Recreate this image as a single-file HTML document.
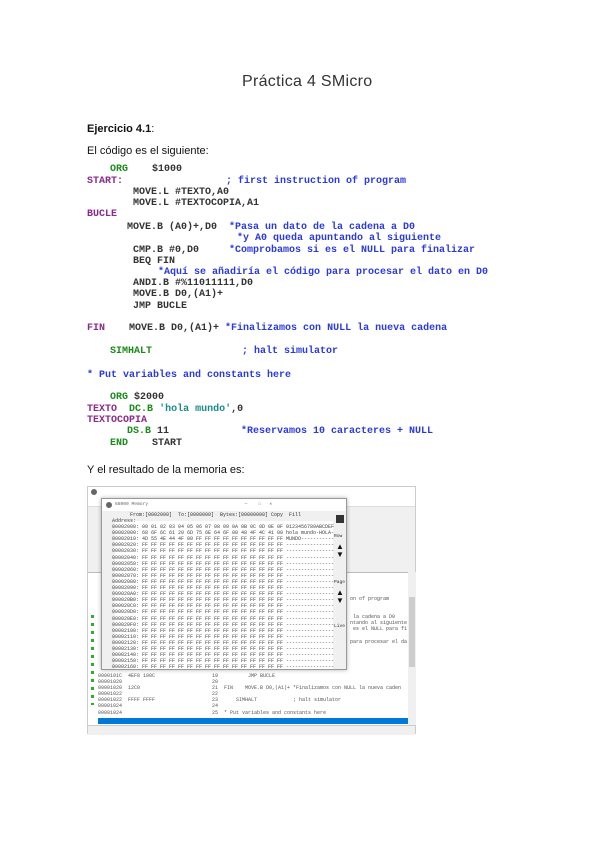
<!DOCTYPE html>
<html><head><meta charset="utf-8"><style>
body{margin:0;width:600px;height:848px;background:#fff;position:relative;overflow:hidden;font-family:"Liberation Sans",sans-serif}
.t{position:absolute;white-space:pre;font-size:11px;color:#111}
.c{position:absolute;white-space:pre;font-family:"Liberation Mono",monospace;font-size:10px;font-weight:bold;color:#333;line-height:11px}
.g{color:#1a8a1a}.p{color:#8a2a8a}.b{color:#2a3ae0}.tl{color:#1a8a8a}
.m{position:absolute;white-space:pre;font-family:"Liberation Mono",monospace;font-size:4.6px;color:#555;line-height:6.1px}
.mm{font-size:5px}
</style></head><body>
<div class="t" style="left:242px;top:73px;font-size:16px;color:#333;letter-spacing:0.3px">Práctica 4 SMicro</div>
<div class="t" style="left:87px;top:123px;font-weight:bold">Ejercicio 4.1<span style="font-weight:normal">:</span></div>
<div class="t" style="left:87px;top:145px">El código es el siguiente:</div>

<div class="c" style="left:110px;top:164px"><span class="g">ORG</span>    $1000</div>
<div class="c p" style="left:87px;top:176px">START:</div>
<div class="c b" style="left:226px;top:176px">; first instruction of program</div>
<div class="c" style="left:133px;top:187px">MOVE.L #TEXTO,A0</div>
<div class="c" style="left:133px;top:198px">MOVE.L #TEXTOCOPIA,A1</div>
<div class="c p" style="left:87px;top:209px">BUCLE</div>
<div class="c" style="left:127px;top:222px">MOVE.B (A0)+,D0  <span class="b">*Pasa un dato de la cadena a D0</span></div>
<div class="c b" style="left:237px;top:233px">*y A0 queda apuntando al siguiente</div>
<div class="c" style="left:133px;top:245px">CMP.B #0,D0     <span class="b">*Comprobamos si es el NULL para finalizar</span></div>
<div class="c" style="left:133px;top:256px">BEQ FIN</div>
<div class="c b" style="left:158px;top:267px">*Aquí se añadiría el código para procesar el dato en D0</div>
<div class="c" style="left:133px;top:278px">ANDI.B #%11011111,D0</div>
<div class="c" style="left:133px;top:289px">MOVE.B D0,(A1)+</div>
<div class="c" style="left:133px;top:301px">JMP BUCLE</div>
<div class="c" style="left:87px;top:323px"><span class="p">FIN</span>    MOVE.B D0,(A1)+ <span class="b">*Finalizamos con NULL la nueva cadena</span></div>
<div class="c g" style="left:110px;top:346px">SIMHALT</div>
<div class="c b" style="left:242px;top:346px">; halt simulator</div>
<div class="c b" style="left:87px;top:370px">* Put variables and constants here</div>
<div class="c" style="left:110px;top:392px"><span class="g">ORG</span> $2000</div>
<div class="c" style="left:87px;top:404px"><span class="p">TEXTO</span>  <span class="g">DC.B</span> <span class="tl">'hola mundo'</span>,0</div>
<div class="c p" style="left:87px;top:415px">TEXTOCOPIA</div>
<div class="c" style="left:127px;top:426px"><span class="g">DS.B</span> 11            <span class="b">*Reservamos 10 caracteres + NULL</span></div>
<div class="c" style="left:110px;top:438px"><span class="g">END</span>    START</div>

<div class="t" style="left:87px;top:464px">Y el resultado de la memoria es:</div>

<!-- screenshot -->
<div style="position:absolute;left:87px;top:486px;width:329px;height:248px;background:#f0f0f0;border:1px solid #ccc;box-sizing:border-box">
 <div style="position:absolute;left:0;top:0;right:0;height:12px;background:#fff"></div>
 <div style="position:absolute;left:3px;top:2px;width:6px;height:6px;border-radius:50%;background:#666"></div>
 <div style="position:absolute;left:0;top:12px;right:0;height:7px;background:#fff;border-bottom:1px solid #ddd"></div>
 <div style="position:absolute;left:0;top:85px;width:321px;height:153px;background:#fff;border-top:1px solid #bbb"></div>
 <div style="position:absolute;left:320px;top:85px;width:8px;height:153px;background:#f0f0f0"></div>
 <div style="position:absolute;left:321px;top:110px;width:6px;height:70px;background:#cdcdcd"></div>
 <div style="position:absolute;left:10px;top:231px;width:310px;height:6px;background:#0078d7"></div>
 <div style="position:absolute;left:0;top:238px;right:0;height:9px;background:#f0f0f0;border-top:1px solid #ccc"></div>
 <div class="m mm" style="left:10px;top:186px">0000101C  4EF8 100C                   19          JMP BUCLE
00001020                              20
00001020  12C0                        21  FIN    MOVE.B D0,(A1)+ *Finalizamos con NULL la nueva caden
00001022                              22
00001022  FFFF FFFF                   23      SIMHALT            ; halt simulator
00001024                              24
00001024                              25  * Put variables and constants here</div>
 <div class="m mm" style="left:262px;top:109px">on of program


 la cadena a D0
ntando al siguiente
 es el NULL para fi

para procesar el da</div>
 <div style="position:absolute;left:3px;top:128px;width:3px;height:90px;background:repeating-linear-gradient(#3a3 0 3px,transparent 3px 8px)"></div>
</div>
<!-- memory window -->
<div style="position:absolute;left:101px;top:498px;width:246px;height:172px;background:#f0f0f0;border:1px solid #999;box-sizing:border-box;box-shadow:0 0 4px rgba(0,0,0,.3)">
 <div style="position:absolute;left:0;top:0;right:0;height:12px;background:#fff"></div>
 <div style="position:absolute;left:4px;top:3px;width:6px;height:6px;border-radius:50%;background:#666"></div>
 <div class="m" style="left:13px;top:3px;color:#666">68000 Memory                                   —    ☐   ✕</div>
 <div class="m mm" style="left:4px;top:13px;color:#333">        From:[0002000]  To:[0000000]  Bytes:[00000000] Copy  Fill</div>
 <div style="position:absolute;left:13px;top:22px;width:218px;height:148px;background:#fff"></div>
 <div class="m mm" style="left:10px;top:19px;color:#444">Address:
00002000: 00 01 02 03 04 05 06 07 08 09 0A 0B 0C 0D 0E 0F 0123456789ABCDEF
00002000: 68 6F 6C 61 20 6D 75 6E 64 6F 00 48 4F 4C 41 00 hola mundo-HOLA-
00002010: 4D 55 4E 44 4F 00 FF FF FF FF FF FF FF FF FF FF MUNDO-----------
00002020: FF FF FF FF FF FF FF FF FF FF FF FF FF FF FF FF ----------------
00002030: FF FF FF FF FF FF FF FF FF FF FF FF FF FF FF FF ----------------
00002040: FF FF FF FF FF FF FF FF FF FF FF FF FF FF FF FF ----------------
00002050: FF FF FF FF FF FF FF FF FF FF FF FF FF FF FF FF ----------------
00002060: FF FF FF FF FF FF FF FF FF FF FF FF FF FF FF FF ----------------
00002070: FF FF FF FF FF FF FF FF FF FF FF FF FF FF FF FF ----------------
00002080: FF FF FF FF FF FF FF FF FF FF FF FF FF FF FF FF ----------------
00002090: FF FF FF FF FF FF FF FF FF FF FF FF FF FF FF FF ----------------
000020A0: FF FF FF FF FF FF FF FF FF FF FF FF FF FF FF FF ----------------
000020B0: FF FF FF FF FF FF FF FF FF FF FF FF FF FF FF FF ----------------
000020C0: FF FF FF FF FF FF FF FF FF FF FF FF FF FF FF FF ----------------
000020D0: FF FF FF FF FF FF FF FF FF FF FF FF FF FF FF FF ----------------
000020E0: FF FF FF FF FF FF FF FF FF FF FF FF FF FF FF FF ----------------
000020F0: FF FF FF FF FF FF FF FF FF FF FF FF FF FF FF FF ----------------
00002100: FF FF FF FF FF FF FF FF FF FF FF FF FF FF FF FF ----------------
00002110: FF FF FF FF FF FF FF FF FF FF FF FF FF FF FF FF ----------------
00002120: FF FF FF FF FF FF FF FF FF FF FF FF FF FF FF FF ----------------
00002130: FF FF FF FF FF FF FF FF FF FF FF FF FF FF FF FF ----------------
00002140: FF FF FF FF FF FF FF FF FF FF FF FF FF FF FF FF ----------------
00002150: FF FF FF FF FF FF FF FF FF FF FF FF FF FF FF FF ----------------
00002160: FF FF FF FF FF FF FF FF FF FF FF FF FF FF FF FF ----------------</div>
 <div style="position:absolute;left:234px;top:16px;width:8px;height:8px;background:#333"></div>
 <div class="m" style="left:232px;top:35px;color:#333">Row</div>
 <div style="position:absolute;left:234px;top:44px;font-size:8px;line-height:8px;color:#111">▲<br>▼</div>
 <div class="m" style="left:232px;top:81px;color:#333">Page</div>
 <div style="position:absolute;left:234px;top:90px;font-size:8px;line-height:8px;color:#111">▲<br>▼</div>
 <div class="m" style="left:232px;top:125px;color:#333">Live</div>
</div>
</body></html>
